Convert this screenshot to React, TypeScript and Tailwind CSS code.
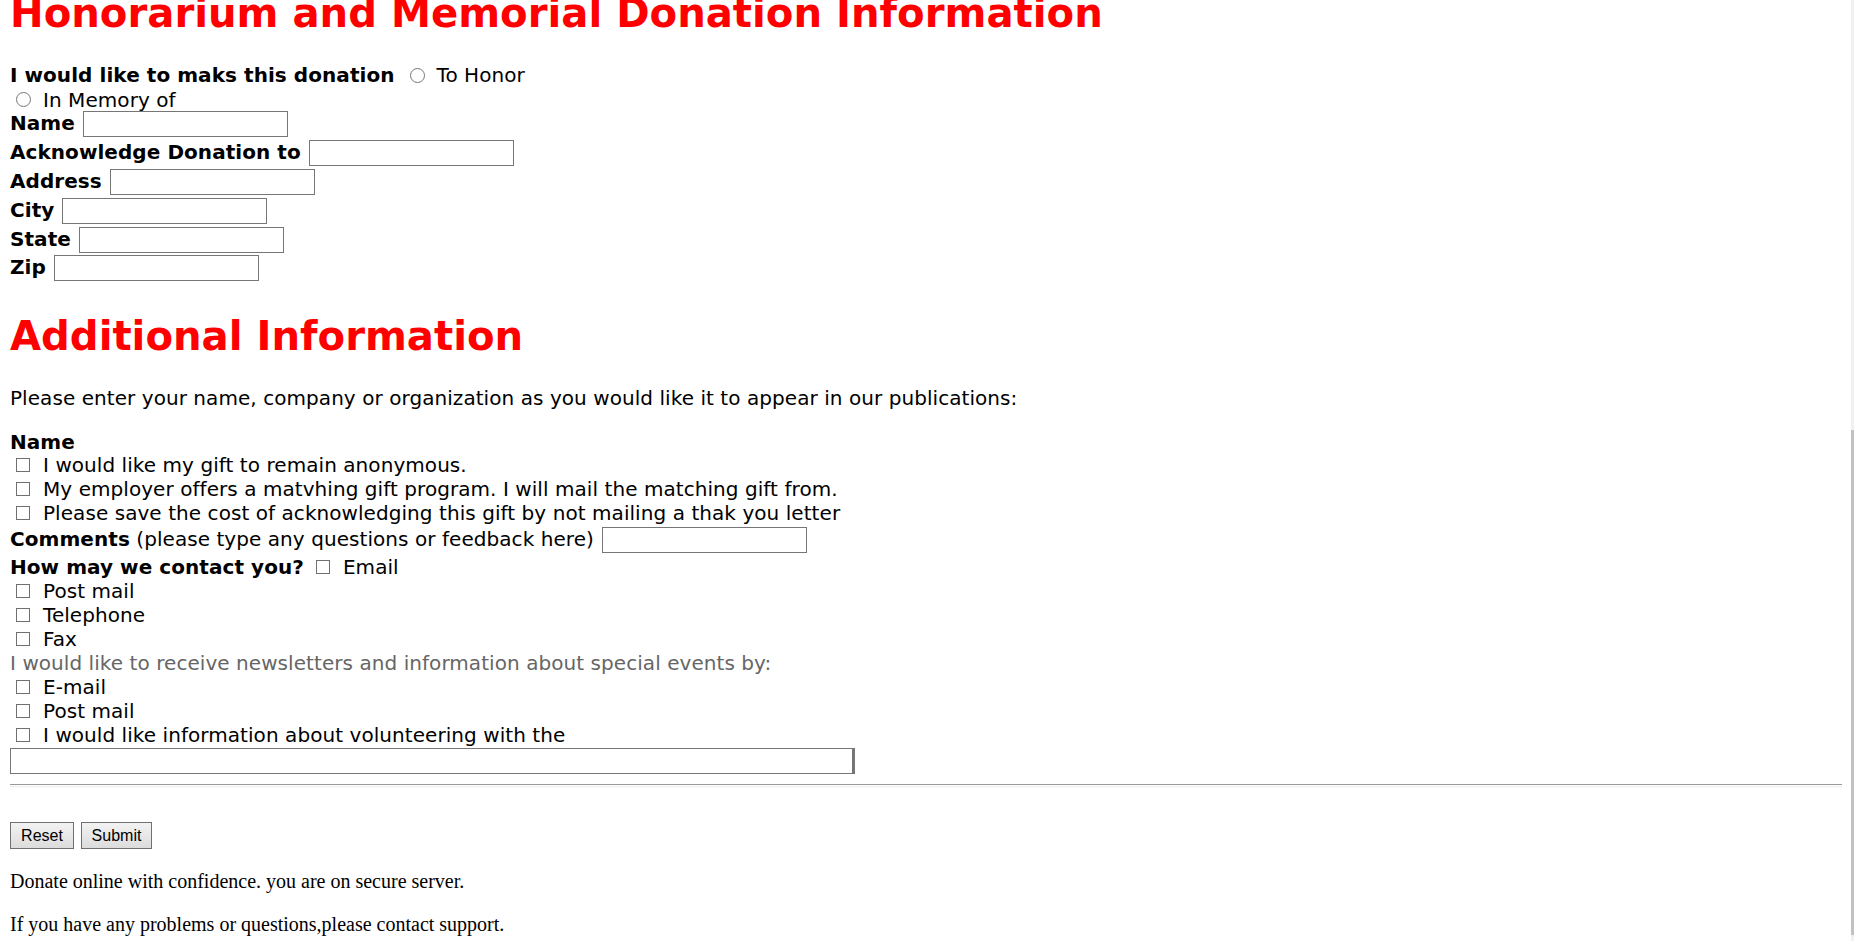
const verdana = "font-['DejaVu_Sans','Verdana',sans-serif]";

function Radio({ className = "" }: { className?: string }) {
  return (
    <span
      className={`inline-block h-[15px] w-[15px] shrink-0 rounded-full border border-[#767676] bg-white ${className}`}
    />
  );
}

function Box({ className = "" }: { className?: string }) {
  return (
    <span
      className={`inline-block h-[14px] w-[14px] shrink-0 border border-[#6f6f6f] bg-white ${className}`}
    />
  );
}

function TextBox({ className = "" }: { className?: string }) {
  return (
    <input
      type="text"
      className={`h-[26px] w-[205px] shrink-0 border border-[#767676] bg-white outline-none ${className}`}
    />
  );
}

const fieldRows = ["Name", "Acknowledge Donation to", "Address", "City", "State", "Zip"];

const optionRows = [
  "I would like my gift to remain anonymous.",
  "My employer offers a matvhing gift program. I will mail the matching gift from.",
  "Please save the cost of acknowledging this gift by not mailing a thak you letter",
];

function CheckRow({ label }: { label: string }) {
  return (
    <div className="flex h-[24px] items-center">
      <Box className="ml-[6px]" />
      <span className="ml-[13px] whitespace-nowrap">{label}</span>
    </div>
  );
}

export default function App() {
  return (
    <div className="relative h-[941px] overflow-hidden bg-white">
      <div
        className={`flex flex-col pl-[10px] pr-[12px] text-[20px] tracking-[0.06px] text-black ${verdana}`}
      >
        <h1 className="-mt-[11px] h-[48px] whitespace-nowrap text-[40.2px] font-bold leading-[48px] tracking-normal text-[#ff0000]">
          Honorarium and Memorial Donation Information
        </h1>

        <div className="mt-[26px] flex h-[24px] items-center">
          <span className="whitespace-nowrap font-bold">I would like to maks this donation</span>
          <Radio className="ml-[15px]" />
          <span className="ml-[12px]">To Honor</span>
        </div>
        <div className="flex h-[23px] items-center pt-[2px]">
          <Radio className="ml-[6px]" />
          <span className="ml-[12px]">In Memory of</span>
        </div>
        {fieldRows.map((label) => (
          <div key={label} className="flex h-[28.8px] items-center">
            <span className="whitespace-nowrap pb-[2px] font-bold">{label}</span>
            <TextBox className="ml-[8px]" />
          </div>
        ))}

        <h2 className="mt-[29px] h-[48px] whitespace-nowrap text-[40.2px] font-bold leading-[48px] tracking-normal text-[#ff0000]">
          Additional Information
        </h2>

        <p className="mt-[26px] flex h-[24px] items-center whitespace-nowrap">
          Please enter your name, company or organization as you would like it to appear in our
          publications:
        </p>

        <div className="mt-[19.5px] flex h-[24px] items-center pt-[2px] font-bold">Name</div>
        {optionRows.map((label) => (
          <CheckRow key={label} label={label} />
        ))}
        <div className="flex h-[30px] items-center">
          <span className="whitespace-nowrap pb-[3px]">
            <b>Comments</b> (please type any questions or feedback here)
          </span>
          <TextBox className="ml-[8px] -mt-[1px]" />
        </div>
        <div className="flex h-[24px] items-center">
          <span className="whitespace-nowrap font-bold">How may we contact you?</span>
          <Box className="ml-[12px]" />
          <span className="ml-[13px]">Email</span>
        </div>
        <CheckRow label="Post mail" />
        <CheckRow label="Telephone" />
        <CheckRow label="Fax" />
        <div className="flex h-[24px] items-center whitespace-nowrap text-[#666666]">
          I would like to receive newsletters and information about special events by:
        </div>
        <CheckRow label="E-mail" />
        <CheckRow label="Post mail" />
        <CheckRow label="I would like information about volunteering with the" />
        <input
          type="text"
          className="mt-[1px] h-[26px] w-[845px] border border-r-[3px] border-[#767676] bg-white outline-none"
        />

        <hr className="mt-[10px] h-[3px] border-t border-b border-[#9a9a9a] border-b-[#eeeeee]" />

        <div className="mt-[35px] flex gap-[7px] font-['Liberation_Sans',Arial,sans-serif] text-[16px] tracking-normal">
          <button className="h-[27px] w-[64px] border border-[#707070] bg-linear-to-b from-[#f3f3f3] to-[#dcdcdc] text-black">
            Reset
          </button>
          <button className="h-[27px] w-[71px] border border-[#707070] bg-linear-to-b from-[#f3f3f3] to-[#dcdcdc] text-black">
            Submit
          </button>
        </div>

        <div className="font-['Liberation_Serif','Times_New_Roman',serif] text-[20px] tracking-normal">
          <p className="mt-[20.5px] flex h-[22px] items-center">
            Donate online with confidence. you are on secure server.
          </p>
          <p className="mt-[21px] flex h-[22px] items-center">
            If you have any problems or questions,please contact support.
          </p>
        </div>
      </div>

      <div className="absolute right-0 top-0 h-full w-[3px] bg-[#f0f0f0]">
        <div className="mt-[430px] h-[505px] w-full bg-[#c1c1c1]" />
      </div>
    </div>
  );
}
